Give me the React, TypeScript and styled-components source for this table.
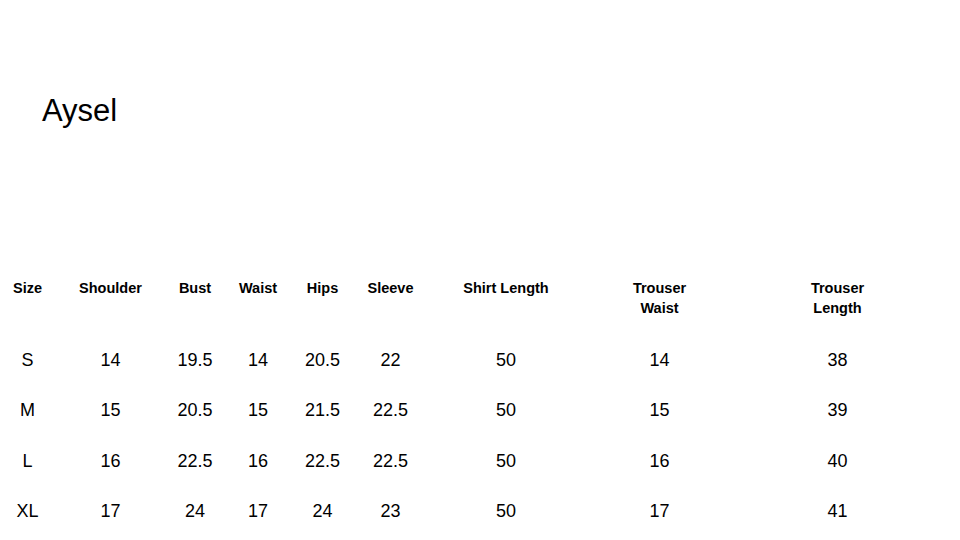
import React from 'react';
import styled, { createGlobalStyle } from 'styled-components';

// --- 사이즈 표 데이터 ---
const COLUMNS = ['Size', 'Shoulder', 'Bust', 'Waist', 'Hips', 'Sleeve', 'Shirt Length', 'Trouser\nWaist', 'Trouser\nLength'];

const ROWS: string[][] = [
  ['S', '14', '19.5', '14', '20.5', '22', '50', '14', '38'],
  ['M', '15', '20.5', '15', '21.5', '22.5', '50', '15', '39'],
  ['L', '16', '22.5', '16', '22.5', '22.5', '50', '16', '40'],
  ['XL', '17', '24', '17', '24', '23', '50', '17', '41'],
];

const GlobalStyle = createGlobalStyle`
  html, body {
    margin: 0;
    padding: 0;
    background: #ffffff;
  }
  body {
    font-family: "Liberation Sans", Arial, sans-serif;
    color: #000000;
  }
`;

const Slide = styled.div`
  width: 960px;
  height: 540px;
  overflow: hidden;
  background: #ffffff;
  display: flex;
  flex-direction: column;
`;

const Title = styled.h1`
  margin: 95px 0 0 42px;
  font-size: 31px;
  font-weight: 400;
  line-height: 31px;
`;

const SizeTable = styled.div`
  margin-top: 152px;
  display: grid;
  grid-template-columns: 55px 111px 58px 68px 61px 75px 156px 151px 205px;
  grid-template-rows: 57px;
  grid-auto-rows: 50.3px;
`;

const HeadCell = styled.div`
  font-size: 14.5px;
  font-weight: 700;
  line-height: 20px;
  text-align: center;
  white-space: pre-line;
`;

const Cell = styled.div`
  font-size: 18px;
  line-height: 50px;
  text-align: center;
`;

const App = () => {
  return (
    <>
      <GlobalStyle />
      <Slide>
        <Title>Aysel</Title>
        <SizeTable>
          {COLUMNS.map(col => (
            <HeadCell key={col}>{col}</HeadCell>
          ))}
          {ROWS.map(row =>
            row.map((value, i) => <Cell key={`${row[0]}-${i}`}>{value}</Cell>)
          )}
        </SizeTable>
      </Slide>
    </>
  );
};

export default App;
